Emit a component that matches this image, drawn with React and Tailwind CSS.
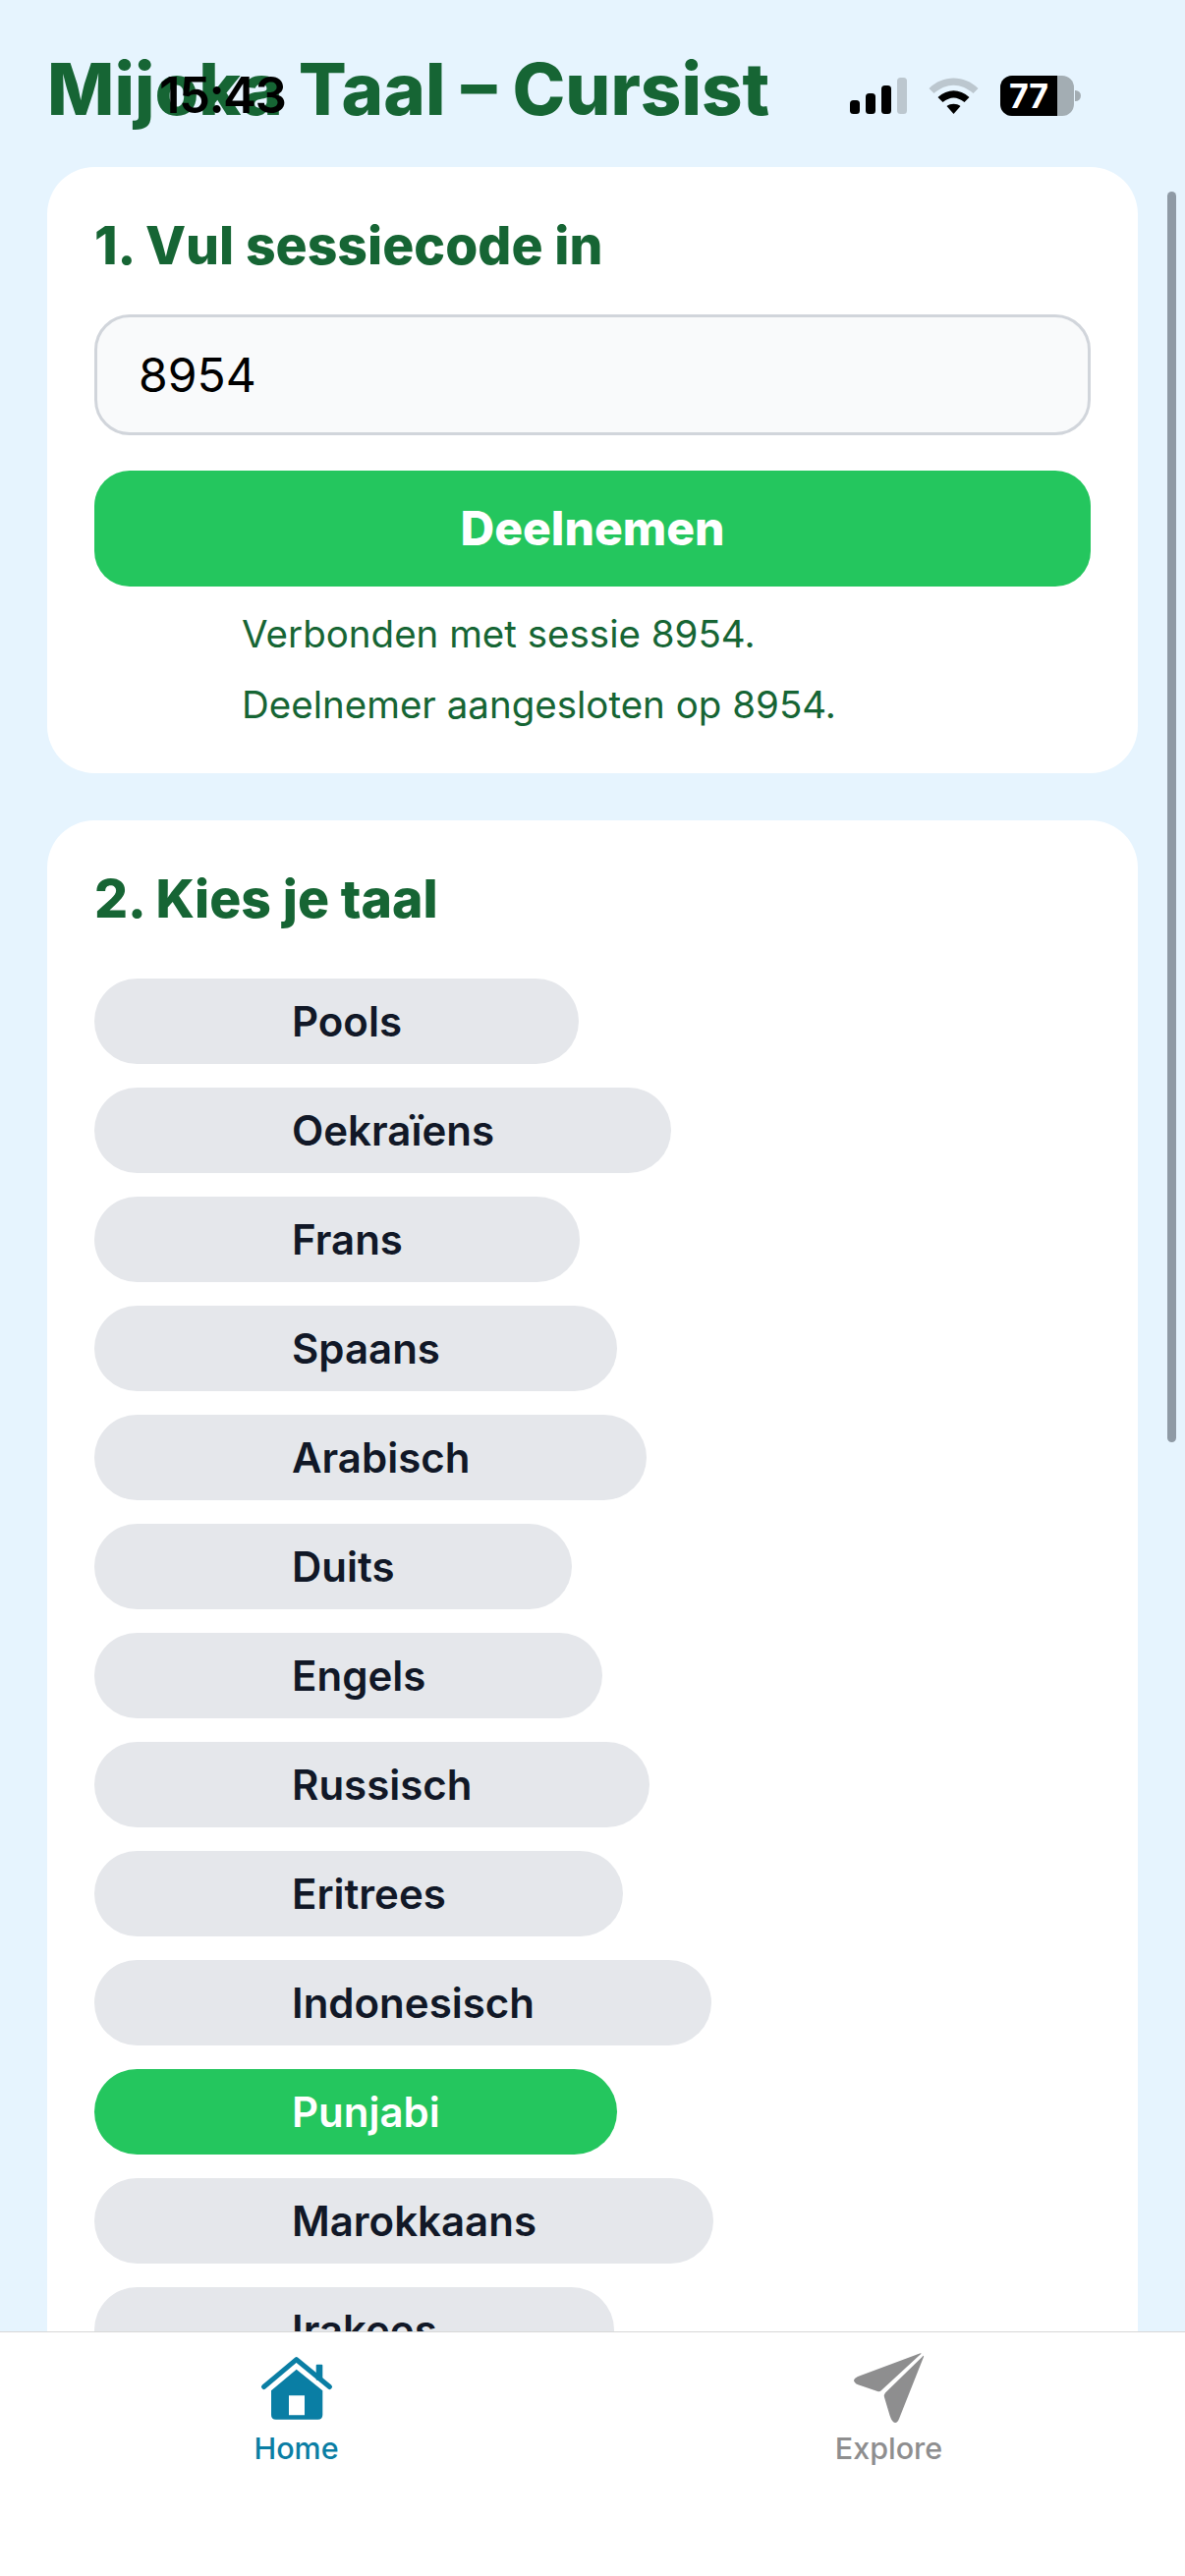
const languages = [
  "Pools",
  "Oekraïens",
  "Frans",
  "Spaans",
  "Arabisch",
  "Duits",
  "Engels",
  "Russisch",
  "Eritrees",
  "Indonesisch",
  "Punjabi",
  "Marokkaans",
  "Irakees",
];

function StatusBar() {
  return (
    <div className="absolute top-0 left-0 right-0 flex h-[195px] items-center pl-[162px] text-black">
      <span className="text-[51px] font-semibold tracking-[-1.6px]">15:43</span>
      <div className="ml-auto mr-[106px] flex items-center gap-[22px]">
        <svg width="58" height="37" viewBox="0 0 58 37">
          <rect x="0" y="23" width="10" height="14" rx="3.5" fill="#000" />
          <rect x="16" y="16" width="10" height="21" rx="3.5" fill="#000" />
          <rect x="32" y="8" width="10" height="29" rx="3.5" fill="#000" />
          <rect x="48" y="0" width="10" height="37" rx="3.5" fill="#bcc7cf" />
        </svg>
        <svg width="51" height="37" viewBox="0 0 50 37">
          <path d="M0 11 C14 -3 36 -3 50 11 L45 16 C32 5 18 5 5 16 Z" fill="#bcc7cf" />
          <path d="M9 20 C19 11 31 11 41 20 L36 25 C28 19 22 19 14 25 Z" fill="#000" />
          <path d="M18 29 C22 26 28 26 32 29 L25 37 Z" fill="#000" />
        </svg>
        <div className="flex items-center">
          <div className="flex h-[41px] w-[75px] overflow-hidden rounded-[12px] bg-[#a3adb3]">
            <div className="flex w-[58px] items-center justify-center bg-black text-[34px] font-bold text-white">
              77
            </div>
          </div>
          <div className="ml-[1px] h-[11px] w-[6px] rounded-r-full bg-[#a3adb3]" />
        </div>
      </div>
    </div>
  );
}

function TabBar() {
  return (
    <div className="grid h-[249px] shrink-0 grid-cols-2 border-t-[1px] border-[#d8d8d8] bg-white">
      <div className="flex flex-col items-center pt-[18px] text-[#0a7ea4]">
        <svg width="80" height="80" viewBox="0 0 80 80" fill="currentColor">
          <path d="M6.5 37.5 L39.7 9.7 L73.5 37.5" fill="none" stroke="currentColor" strokeWidth="5" strokeLinecap="round" strokeLinejoin="round" />
          <rect x="59.7" y="14.7" width="6.6" height="16" rx="1" />
          <path d="M39.7 19.7 L66.3 41.3 V66 Q66.3 70.7 61.5 70.7 H18.8 Q14 70.7 14 66 V41.3 Z M32 46.3 V66.3 H48 V46.3 Z" fillRule="evenodd" />
        </svg>
        <span className="text-[30.5px] font-medium leading-[40px]">Home</span>
      </div>
      <div className="flex flex-col items-center pt-[18px] text-[#8e8e8f]">
        <svg width="80" height="80" viewBox="0 0 80 80" fill="currentColor">
          <path d="M71 3.5 L8 27 Q2 30 5 33 Q6 34.5 9 35.5 L28 42 Q30.5 43 32 41 L70 6 Q74.5 2.5 71 3.5 Z" />
          <path d="M73.5 7 L36 43.5 Q34.3 45.5 35 48 L40.5 66.5 Q43 74 46 74 Q48.5 74 50 70 L75 7 Q75.5 4.5 73.5 7 Z" />
        </svg>
        <span className="text-[30.5px] font-medium leading-[40px]">Explore</span>
      </div>
    </div>
  );
}

export default function App() {
  return (
    <div className="relative flex h-[2622px] w-[1206px] flex-col overflow-hidden bg-[#e6f4fe] font-['Inter',sans-serif]">
      <StatusBar />
      {/* scrollbar */}
      <div className="absolute right-[9px] top-[195px] h-[1273px] w-[9px] rounded-full bg-[#8f9aa5]" />

      <main className="flex-1 overflow-hidden px-[48px] pt-[48px]">
        <h1 className="text-[72.5px] font-extrabold leading-[86px] text-[#166534]">Mijoka Taal – Cursist</h1>

        <section className="mt-[36px] rounded-[48px] bg-white px-[48px] pb-[46px] pt-[48px]">
          <h2 className="text-[53.5px] font-extrabold leading-[64px] text-[#166534]">1. Vul sessiecode in</h2>
          <div className="mt-[38px] flex h-[123px] items-center rounded-[36px] border-[3px] border-[#d1d5db] bg-[#f9fafb] px-[42px] text-[48px] text-black">
            8954
          </div>
          <button className="mt-[36px] h-[118px] w-full rounded-[36px] bg-[#24c65e] text-[48px] font-extrabold text-white">
            Deelnemen
          </button>
          <div className="mt-[24px] pl-[150px] text-[38.5px] leading-[48px] text-[#166534]">
            <p>Verbonden met sessie 8954.</p>
            <p className="mt-[24px]">Deelnemer aangesloten op 8954.</p>
          </div>
        </section>

        <section className="mt-[48px] rounded-[48px] bg-white p-[48px]">
          <h2 className="text-[53.5px] font-extrabold leading-[64px] text-[#166534]">2. Kies je taal</h2>
          <div className="mt-[49px] flex flex-col items-start gap-[24px]">
            {languages.map((name) => (
              <div
                key={name}
                className={
                  name === "Punjabi"
                    ? "flex h-[87px] items-center rounded-full bg-[#24c65e] pl-[201px] pr-[180px] text-[42px] font-semibold text-white"
                    : "flex h-[87px] items-center rounded-full bg-[#e5e7eb] pl-[201px] pr-[180px] text-[42px] font-semibold text-[#111827]"
                }
              >
                {name}
              </div>
            ))}
          </div>
        </section>
      </main>

      <TabBar />
    </div>
  );
}
